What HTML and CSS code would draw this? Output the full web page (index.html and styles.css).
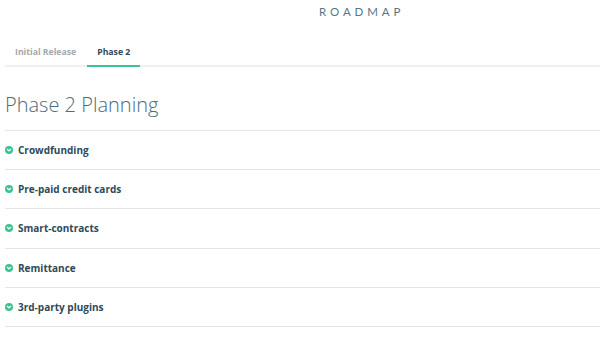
FILE: index.html
```html
<!DOCTYPE html>
<html>
<head>
<meta charset="utf-8">
<link rel="stylesheet" href="styles.css">
</head>
<body>
<div class="page">
  <header class="brand">ROADMAP</header>
  <nav class="tabs">
    <a class="tab">Initial Release</a>
    <a class="tab active">Phase 2</a>
  </nav>
  <h1 class="title">Phase 2 Planning</h1>
  <ul class="items">
    <li class="item"><svg class="ico" viewBox="0 0 16 16"><circle cx="8" cy="8" r="8" fill="#3cc48f"/><path d="M4.6 6.6 L8 9.8 L11.4 6.6" fill="none" stroke="#fff" stroke-width="2.4" stroke-linecap="round" stroke-linejoin="round"/></svg>Crowdfunding</li>
    <li class="item"><svg class="ico" viewBox="0 0 16 16"><circle cx="8" cy="8" r="8" fill="#3cc48f"/><path d="M4.6 6.6 L8 9.8 L11.4 6.6" fill="none" stroke="#fff" stroke-width="2.4" stroke-linecap="round" stroke-linejoin="round"/></svg>Pre-paid credit cards</li>
    <li class="item"><svg class="ico" viewBox="0 0 16 16"><circle cx="8" cy="8" r="8" fill="#3cc48f"/><path d="M4.6 6.6 L8 9.8 L11.4 6.6" fill="none" stroke="#fff" stroke-width="2.4" stroke-linecap="round" stroke-linejoin="round"/></svg>Smart-contracts</li>
    <li class="item"><svg class="ico" viewBox="0 0 16 16"><circle cx="8" cy="8" r="8" fill="#3cc48f"/><path d="M4.6 6.6 L8 9.8 L11.4 6.6" fill="none" stroke="#fff" stroke-width="2.4" stroke-linecap="round" stroke-linejoin="round"/></svg>Remittance</li>
    <li class="item"><svg class="ico" viewBox="0 0 16 16"><circle cx="8" cy="8" r="8" fill="#3cc48f"/><path d="M4.6 6.6 L8 9.8 L11.4 6.6" fill="none" stroke="#fff" stroke-width="2.4" stroke-linecap="round" stroke-linejoin="round"/></svg>3rd-party plugins</li>
  </ul>
</div>
</body>
</html>
```
FILE: styles.css
```css
html, body {
  margin: 0;
  padding: 0;
  background: #ffffff;
}
body {
  font-family: "Open Sans", "Noto Sans", sans-serif;
  color: #2f4a58;
}
.page {
  padding: 0 0 0 5px;
}
.brand {
  padding: 5px 0 0 314px;
  height: 25px;
  font-family: "Lato", "Open Sans", sans-serif;
  font-size: 11.5px;
  letter-spacing: 3.9px;
  color: #557787;
  line-height: 14px;
}
.tabs {
  display: flex;
  margin-top: 10px;
  border-bottom: 2px solid #f0f0f0;
}
.tab {
  display: block;
  padding: 6px 10px 7px;
  font-size: 8.7px;
  font-weight: 700;
  line-height: 12px;
  color: #a3a9ad;
  margin-bottom: -2px;
  border-bottom: 2px solid transparent;
}
.tab.active {
  margin-left: 1px;
  color: #2f4a58;
  border-bottom-color: #3cc48f;
}
.title {
  margin: 0;
  padding: 24px 0 11px 0;
  font-size: 20px;
  font-weight: 300;
  line-height: 28px;
  color: #4c6c7c;
  border-bottom: 1px solid #e6e6e6;
}
.items {
  list-style: none;
  margin: 0;
  padding: 0;
}
.item {
  display: flex;
  align-items: center;
  gap: 5px;
  height: 38.2px;
  border-bottom: 1px solid #e6e6e6;
  font-size: 10px;
  font-weight: 700;
  color: #2e4a59;
}
.ico {
  width: 8px;
  height: 8px;
  flex: none;
}
```
